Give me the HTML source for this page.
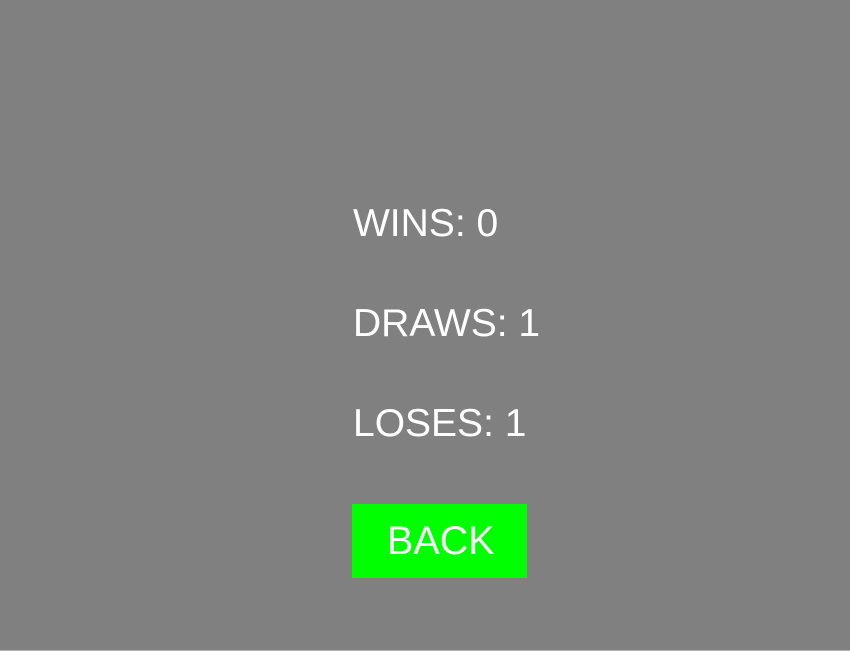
<!DOCTYPE html>
<html><head><style>
html,body{margin:0;padding:0}
body{width:850px;height:651px;background:#808080;position:relative;overflow:hidden;font-family:"Liberation Sans",Arial,sans-serif;color:#fff}
.t{position:absolute;left:353px;font-size:39px;line-height:39px;white-space:nowrap}
.btn{position:absolute;left:352px;top:504px;width:175px;height:74px;background:#00ff00}
.bl{position:absolute;left:0;top:650px;width:850px;height:1px;background:#b0b0b0}
</style></head><body>
<div class="t" style="top:204px">WINS: 0</div>
<div class="t" style="top:304px">DRAWS: 1</div>
<div class="t" style="top:404px">LOSES: 1</div>
<div class="btn"></div>
<div class="t" style="top:522px;left:387px;font-size:39.5px">BACK</div>
<div class="bl"></div>
</body></html>
